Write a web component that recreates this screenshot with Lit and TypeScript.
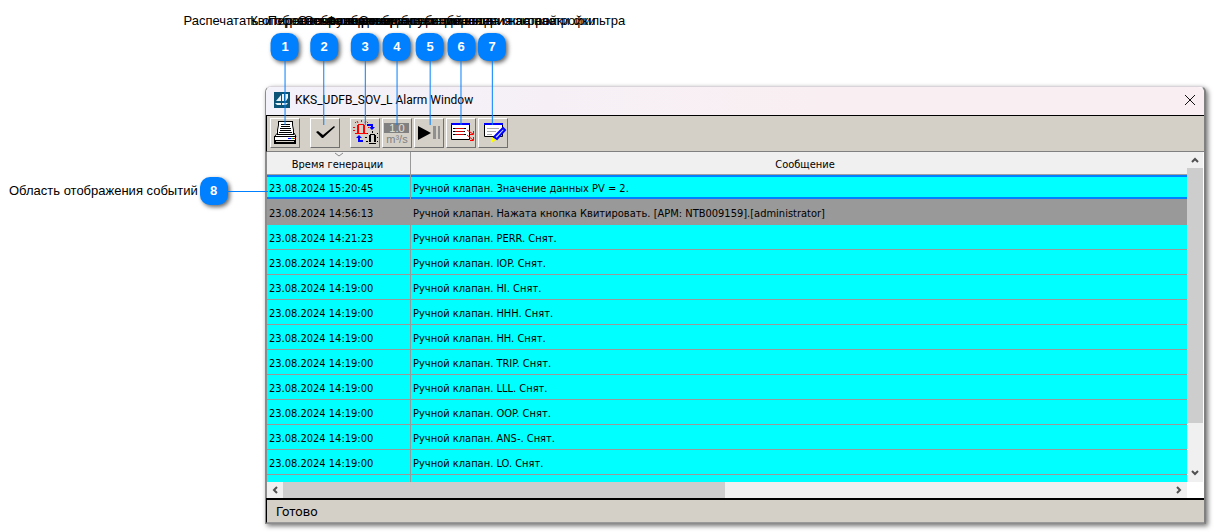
import { LitElement, html, css, svg } from "lit";
import { customElement } from "lit/decorators.js";
import { styleMap } from "lit/directives/style-map.js";
import { classMap } from "lit/directives/class-map.js";

const EVENTS = [
  { time: "23.08.2024 15:20:45", text: "Ручной клапан. Значение данных PV = 2.", state: "selected" },
  { time: "23.08.2024 14:56:13", text: "Ручной клапан. Нажата кнопка Квитировать. [АРМ: NTB009159].[administrator]", state: "acked" },
  { time: "23.08.2024 14:21:23", text: "Ручной клапан. PERR. Снят.", state: "" },
  ...["IOP", "HI", "HHH", "HH", "TRIP", "LLL", "OOP", "ANS-", "LO"].map((name) => ({
    time: "23.08.2024 14:19:00",
    text: `Ручной клапан. ${name}. Снят.`,
    state: "",
  })),
  { time: "", text: "", state: "" },
];

const CALLOUTS = [
  { n: 1, x: 285, label: "Распечатать отображение экрана" },
  { n: 2, x: 324, label: "Квитировать сообщение" },
  { n: 3, x: 365, label: "Переключение режима событий" },
  { n: 4, x: 397, label: "Отображение единиц измерения" },
  { n: 5, x: 430, label: "Остановка или запуск обновления экрана" },
  { n: 6, x: 461, label: "Функция отображения ввода окна настройки" },
  { n: 7, x: 492, label: "Отображение диалога и настройки фильтра" },
];

const icons = {
  print: svg`
    <path d="M8 3h15v3l1 11H6l2-11z" fill="#fff"/>
    <path d="M8 3.500h15M8.500 3v4l-1 5v5M22.500 3v4l1 5v4" fill="none" stroke="#000"/>
    <path d="M11 6.500h9M11 8.500h9M10 10.500h11M10 12.500h11M9 14.500h13" stroke="#000" fill="none"/>
    <path d="M7 15l-3 3v8h22v-8l-2-3v2H7z" fill="#fff"/>
    <path d="M7.500 15l-3 3.500M24 15l2 3.500M4 18.500h22M4.500 18v8M25.500 18v8M7 16.500h17" stroke="#000" fill="none"/>
    <path d="M4 22h22v4H4z" fill="#000"/><path d="M6 23h18v1H6z" fill="#d4d0c8"/>
    <path d="M18 20h3v1h-3z" fill="#00f"/><path d="M21 20h2v1h-2z" fill="#0c0"/><path d="M23 20h2v1h-2z" fill="#f00"/>`,
  check: svg`<path d="M6 14l2-1 5 4L24 8l1 1-12 11h-1z" fill="#000"/>`,
  swap: svg`
    <g fill="none" stroke="#f00">
      <path d="M8 7v8M14 7v8" stroke-width="2"/><path d="M8 6.500h6M6 15.500h10"/>
      <path d="M11.500 2v2M5 4l1 1M7 3l1 2M18 4l-1 1M16 3l-1 2M3 9.500h2M3 12.500h2M18 9.500h1M5 16l1-1M17 16l-1-1"/>
    </g>
    <g fill="none" stroke="#000">
      <path d="M20 17v7M25 17v7" stroke-width="2"/><path d="M20 16.500h5M19 25.500h7"/>
      <path d="M22.500 13v2M17 15l1 1M28 15l-1 1M15 19.500h2M27 19.500h1M16 23.500h2M27 23.500h1"/>
    </g>
    <path d="M17 6h6v3h2l-3 3-3-3h2V8h-4z" fill="#00f"/>
    <path d="M13 24H8v-4H6l3-3 3 3h-2v2h3z" fill="#00f"/>`,
  units: svg`
    <path d="M2 5h25v10H2z" fill="#808080"/>
    <text x="15" y="14" text-anchor="middle" font-size="11" fill="#e4e0d8">1.0</text>
    <text x="15" y="25" text-anchor="middle" font-size="11" fill="#808080">m³/s</text>`,
  play: svg`
    <path d="M4 8l13 7-13 7z" fill="#000"/>
    <path d="M19 8h3v13h-3zM24 8h2v13h-2z" fill="#909090"/>`,
  list: svg`
    <path d="M5.500 6.500h18v15h-18z" fill="#fff" stroke="#000"/>
    <path d="M5 5h19v2H5z" fill="#00f"/>
    <path d="M7 10.500h2M7 13.500h2M7 16.500h2M18 10.500h2M18 13.500h1M18 16.500h2" stroke="#000"/>
    <path d="M9 10.500h9M9 13.500h9M9 16.500h9" stroke="#c00"/>
    <path d="M21 12l6 4M27.500 13v3.500H24M21 17l6 5M27.500 19v3.500H24" stroke="#f00" fill="none"/>`,
  edit: svg`
    <path d="M6.500 6.500h18v12h-18z" fill="#fff" stroke="#000"/>
    <path d="M6 5h19v2H6z" fill="#00f"/>
    <path d="M9 10.500h12M9 13.500h9M9 16.500h5" stroke="#aaa"/>
    <path d="M25 10l2 2-8 9-3-2z" fill="#c8dcff" stroke="#00f" stroke-width="2"/>
    <path d="M14 19l4 3-5 3z" fill="#ff0"/>`,
};

const BUTTONS: { icon: keyof typeof icons; label: string; apart?: boolean }[] = [
  { icon: "print", label: "Распечатать" },
  { icon: "check", label: "Квитировать", apart: true },
  { icon: "swap", label: "Переключение", apart: true },
  { icon: "units", label: "Единицы" },
  { icon: "play", label: "Остановка" },
  { icon: "list", label: "Функция" },
  { icon: "edit", label: "Фильтр" },
];

@customElement("alarm-window")
class AlarmWindow extends LitElement {
  static styles = css`
    :host {
      display: block;
      background: #fff;
      border: 1px solid #8c8c8c;
      border-top-color: #d8d4da;
      border-right: 2px solid #808080;
      border-radius: 6px 6px 0 0;
      box-shadow: 2px 2px 5px rgba(0, 0, 0, 0.55);
      font-family: "DejaVu Sans Condensed", "DejaVu Sans", sans-serif;
      font-size: 11px;
      color: #000;
    }
    .title {
      display: flex;
      align-items: center;
      height: 26px;
      padding: 0 8px 2px;
      gap: 5px;
      border-bottom: 1px solid #000;
      border-radius: 6px 6px 0 0;
      background: linear-gradient(90deg, #f3f1fa, #f9eff2 60%);
      font-family: Roboto, sans-serif;
    }
    .name { flex: 1; font-size: 12px; font-weight: 400; margin: 0; }
    .close { width: 12px; height: 12px; padding: 0; border: 0; background: none; display: block; }
    .close svg, .logo, .tool svg { display: block; }
    .tools {
      display: flex;
      gap: 2px;
      height: 30px;
      padding: 2px 3px 3px;
      background: #d4d0c8;
      border-left: 1px solid #000;
      border-bottom: 1px solid #808080;
    }
    .tool {
      width: 30px;
      height: 30px;
      padding: 0;
      border: 1px solid;
      border-color: #fff #707070 #707070 #fff;
      background: #d4d0c8;
    }
    .apart { margin-left: 8px; }
    .view {
      display: grid;
      grid-template-columns: 1fr 16px;
      padding: 0 1px 0 0;
      border-left: 1px solid #8c8c8c;
    }
    .port { height: 330px; overflow: hidden; }
    table { width: 100%; border-collapse: separate; border-spacing: 0; table-layout: fixed; }
    th, td { box-sizing: border-box; }
    .time { width: 144px; }
    th {
      position: relative;
      height: 23px;
      padding: 3px 0 0 12px;
      font-weight: 400;
      background: #f0f0f0;
      border-bottom: 1px solid #a0a0a0;
    }
    th:first-child, td:first-child { border-right: 1px solid #999; }
    th:first-child { padding: 3px 2px 0 0; }
    .sort { position: absolute; top: 0; left: 68px; }
    td {
      height: 25px;
      padding: 4px 2px 0;
      background: #0ff;
      border-bottom: 1px solid #999;
      white-space: nowrap;
    }
    .acked td { background: #999; }
    .selected td { box-shadow: inset 0 2px #0080ff, inset 0 -2px #0080ff; }
    .bar { display: flex; background: #f0f0f0; }
    .vertical { flex-direction: column; }
    .arrow { display: block; flex: none; }
    .vertical .thumb { height: 255px; background: #cdcdcd; }
    .horizontal .thumb { width: 48%; background: #cdcdcd; }
    .rest { flex: 1; }
    .status {
      height: 22px;
      line-height: 24px;
      padding-left: 9px;
      background: #d4d0c8;
      border-top: 2px solid #000;
      border-left: 1px solid #000;
      border-bottom: 1px solid #999;
      font-family: Roboto, sans-serif;
      font-size: 13px;
    }
  `;

  arrow(d: string) {
    return html`<svg class="arrow" width="16" height="16" viewBox="0 0 16 16"><path d=${d} fill="none" stroke="#505050" stroke-width="2" /></svg>`;
  }

  render() {
    return html`
      <header class="title">
        <svg class="logo" width="16" height="16" viewBox="0 0 16 16">
          <path d="M0 0h16v16H0z" fill="#0d5578" />
          <path d="M2 9l5-6v6zM8 2h2v7H8zM11 2h3v4l-2 3h-1zM1 11h6v2H3zM8 11h6l-2 2H8z" fill="#e8f4f8" />
        </svg>
        <h1 class="name">KKS_UDFB_SOV_L Alarm Window</h1>
        <button class="close" aria-label="Закрыть">
          <svg width="12" height="12" viewBox="0 0 12 12"><path d="M1 1l10 10M11 1L1 11" stroke="#111" fill="none" /></svg>
        </button>
      </header>
      <div class="tools">
        ${BUTTONS.map(
          (b) => html`<button class=${classMap({ tool: true, apart: !!b.apart })} aria-label=${b.label}>
            <svg width="28" height="28" viewBox="1 1 28 28" font-family="Liberation Sans">${icons[b.icon]}</svg>
          </button>`
        )}
      </div>
      <div class="view">
        <div class="port">
          <table>
            <thead>
              <tr>
                <th class="time">
                  <svg class="sort" width="8" height="5" viewBox="0 0 8 5"><path d="M0 1l4 3 4-3" fill="none" stroke="#888" /></svg>
                  Время генерации
                </th>
                <th>Сообщение</th>
              </tr>
            </thead>
            <tbody>
              ${EVENTS.map((e) => html`<tr class=${e.state}><td>${e.time}</td><td>${e.text}</td></tr>`)}
            </tbody>
          </table>
        </div>
        <div class="bar vertical">
          ${this.arrow("M5 10l3-3 3 3")}
          <div class="thumb"></div>
          <span class="rest"></span>
          ${this.arrow("M5 5l3 3 3-3")}
        </div>
        <div class="bar horizontal">
          ${this.arrow("M10 5L7 8l3 3")}
          <div class="thumb"></div>
          <span class="rest"></span>
          ${this.arrow("M6 5l3 3-3 3")}
        </div>
      </div>
      <footer class="status">Готово</footer>
    `;
  }
}

@customElement("app-root")
class AppRoot extends LitElement {
  static styles = css`
    :host {
      display: block;
      position: relative;
      overflow: hidden;
      background: #fff;
      padding: 86px 8px 8px 265px;
      font-family: "Liberation Sans", Arial, sans-serif;
      font-size: 13px;
      line-height: 16px;
      color: #000;
    }
    .callout {
      position: absolute;
      top: 13px;
      display: flex;
      flex-direction: column;
      align-items: center;
      transform: translateX(-50%);
      white-space: nowrap;
    }
    .badge {
      box-sizing: border-box;
      width: 28px;
      height: 28px;
      margin-top: 4px;
      border-radius: 10px;
      background: #0080ff;
      box-shadow: 2px 2px 4px rgba(0, 0, 0, 0.6);
      color: #fff;
      font-weight: 700;
      line-height: 28px;
      text-align: center;
    }
    .stem { width: 1px; height: 64px; background: #0080ff; }
    .side {
      position: absolute;
      top: 177px;
      left: 9px;
      display: flex;
      align-items: center;
      white-space: nowrap;
    }
    .side .badge { margin: 0 0 0 2px; }
    .lead { width: 40px; height: 1px; background: #0080ff; }
  `;

  render() {
    return html`
      <alarm-window></alarm-window>
      ${CALLOUTS.map(
        (c) => html`<div class="callout" style=${styleMap({ left: `${c.x}px` })}>
          <span>${c.label}</span><span class="badge">${c.n}</span><span class="stem"></span>
        </div>`
      )}
      <div class="side"><span>Область отображения событий</span><span class="badge">8</span><span class="lead"></span></div>
    `;
  }
}
